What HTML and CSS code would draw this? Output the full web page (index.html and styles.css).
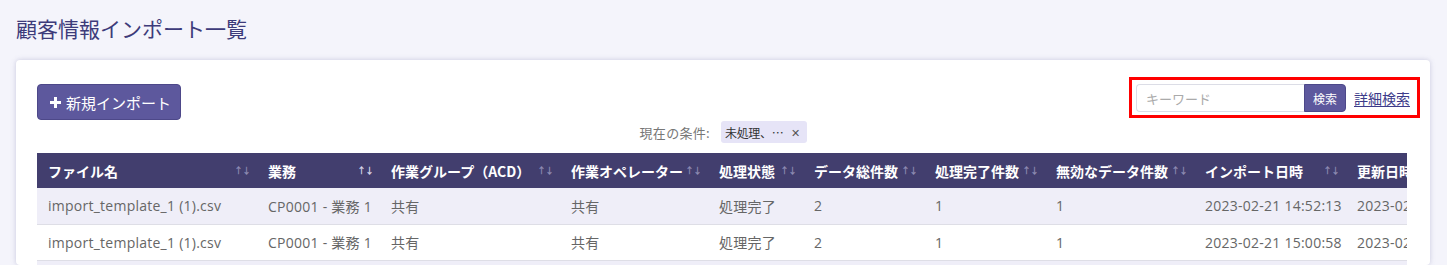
FILE: index.html
```html
<!DOCTYPE html>
<html lang="ja">
<head>
<meta charset="utf-8">
<title>顧客情報インポート一覧</title>
<link rel="stylesheet" href="styles.css">
</head>
<body>
<div class="page">
  <h1 class="title">顧客情報インポート一覧</h1>
  <section class="card">
    <div class="toolbar">
      <button class="btn-primary" type="button">
        <svg class="plus" width="13" height="13" viewBox="0 0 13 13"><path d="M6.5 1v11M1 6.5h11" stroke="#fff" stroke-width="3"/></svg>
        <span>新規インポート</span>
      </button>
      <div class="search">
        <div class="search-group">
          <input class="search-input" type="text" placeholder="キーワード">
          <button class="search-btn" type="button">検索</button>
        </div>
        <a class="detail-link" href="#">詳細検索</a>
      </div>
    </div>
    <div class="conditions">
      <span class="cond-label">現在の条件:</span>
      <span class="chip"><span class="chip-text">未処理、…</span><span class="chip-x">✕</span></span>
    </div>
    <div class="table-wrap">
      <table class="grid">
        <colgroup>
          <col style="width:220px"><col style="width:123px"><col style="width:180px"><col style="width:148px"><col style="width:95px"><col style="width:121px"><col style="width:121px"><col style="width:149px"><col style="width:152px"><col style="width:160px">
        </colgroup>
        <thead>
          <tr>
            <th><span class="th-in"><span>ファイル名</span><span class="sort">↑↓</span></span></th>
            <th><span class="th-in"><span>業務</span><span class="sort active">↑↓</span></span></th>
            <th><span class="th-in"><span>作業グループ（ACD）</span><span class="sort">↑↓</span></span></th>
            <th><span class="th-in"><span>作業オペレーター</span><span class="sort">↑↓</span></span></th>
            <th><span class="th-in"><span>処理状態</span><span class="sort">↑↓</span></span></th>
            <th><span class="th-in"><span>データ総件数</span><span class="sort">↑↓</span></span></th>
            <th><span class="th-in"><span>処理完了件数</span><span class="sort">↑↓</span></span></th>
            <th><span class="th-in"><span>無効なデータ件数</span><span class="sort">↑↓</span></span></th>
            <th><span class="th-in"><span>インポート日時</span><span class="sort">↑↓</span></span></th>
            <th><span class="th-in"><span>更新日時</span><span class="sort">↑↓</span></span></th>
          </tr>
        </thead>
        <tbody>
          <tr>
            <td>import_template_1 (1).csv</td><td>CP0001 - 業務 1</td><td>共有</td><td>共有</td><td>処理完了</td><td>2</td><td>1</td><td>1</td><td>2023-02-21 14:52:13</td><td>2023-02-21 14:52:13</td>
          </tr>
          <tr>
            <td>import_template_1 (1).csv</td><td>CP0001 - 業務 1</td><td>共有</td><td>共有</td><td>処理完了</td><td>2</td><td>1</td><td>1</td><td>2023-02-21 15:00:58</td><td>2023-02-21 15:00:58</td>
          </tr>
          <tr>
            <td>import_template_1 (1).csv</td><td>CP0001 - 業務 1</td><td>共有</td><td>共有</td><td>処理完了</td><td>2</td><td>1</td><td>1</td><td>2023-02-21 15:10:22</td><td>2023-02-21 15:10:22</td>
          </tr>
        </tbody>
      </table>
    </div>
  </section>
</div>
</body>
</html>
```
FILE: styles.css
```css
* { box-sizing: border-box; }
html, body { margin: 0; padding: 0; }
body {
  background: #f4f4fb;
  font-family: "Noto Sans CJK JP", "Noto Sans", sans-serif;
  overflow: hidden;
  height: 265px;
}
.page { padding: 13px 17px 0 16px; }
.title {
  margin: 0;
  font-size: 21px;
  line-height: 30px;
  font-weight: 400;
  color: #3d3b7a;
}
.card {
  margin-top: 17px;
  background: #fff;
  border-radius: 4px;
  box-shadow: 0 0 5px rgba(120, 120, 170, 0.35);
  padding: 24px 20px 0 21px;
  height: 205px;
  overflow: hidden;
}
.toolbar {
  display: flex;
  justify-content: space-between;
  align-items: flex-start;
}
.btn-primary {
  display: flex;
  align-items: center;
  gap: 4px;
  height: 36px;
  width: 144px;
  padding: 0 0 0 11px;
  background: #5d589d;
  border: 1px solid #4d4889;
  border-radius: 4px;
  color: #fff;
  font-family: "Noto Sans CJK JP", sans-serif;
  font-size: 15px;
}
.plus { display: block; }
.search {
  position: relative;
  display: flex;
  align-items: center;
  gap: 8px;
}
.search::after {
  content: "";
  position: absolute;
  left: -7px; right: -10px; top: -7px; bottom: -6px;
  border: 3px solid #f00;
  pointer-events: none;
}
.search-group { display: flex; }
.search-input {
  width: 168px;
  height: 28px;
  border: 1px solid #dcdde6;
  border-right: none;
  border-radius: 4px 0 0 4px;
  padding: 0 9px;
  font-family: "Noto Sans CJK JP", sans-serif;
  font-size: 13px;
  color: #333;
  outline: none;
}
.search-input::placeholder { color: #aaa; }
.search-btn {
  width: 42px;
  height: 28px;
  border: 1px solid #4d4889;
  border-radius: 0 4px 4px 0;
  background: #5d589d;
  color: #fff;
  font-family: "Noto Sans CJK JP", sans-serif;
  font-size: 12px;
  padding: 0;
}
.detail-link {
  color: #3d3b8a;
  font-size: 14px;
  text-decoration: underline;
  text-underline-offset: 2px;
}
.conditions {
  display: flex;
  justify-content: center;
  align-items: center;
  gap: 11px;
  margin-top: 1px;
  height: 22px;
}
.cond-label {
  color: #777;
  font-size: 13px;
  letter-spacing: 0.3px;
}
.chip {
  display: flex;
  align-items: center;
  gap: 8px;
  height: 22px;
  padding: 0 7px 0 4px;
  background: #e6e4f7;
  border-radius: 3px;
  font-size: 12px;
  color: #333;
}
.chip-text { letter-spacing: -0.3px; }
.chip-x { font-size: 11px; color: #555; line-height: 1; }
.table-wrap {
  margin-top: 10px;
  margin-right: 3px;
  overflow: hidden;
}
.grid {
  border-collapse: collapse;
  table-layout: fixed;
  width: 1469px;
  font-family: "Open Sans", "Noto Sans CJK JP", sans-serif;
}
.grid th {
  background: #423e6e;
  color: #fff;
  height: 35px;
  padding: 0 5px 0 11px;
  text-align: left;
  font-size: 14px;
  font-weight: 700;
  font-family: "Noto Sans CJK JP", sans-serif;
  white-space: nowrap;
}
.th-in {
  display: flex;
  justify-content: space-between;
  align-items: center;
}
.sort {
  font-size: 9px;
  color: #8e8bb3;
  letter-spacing: -1px;
  margin-right: 2px;
}
.sort.active { color: #d8d7ea; }
.grid td {
  height: 36px;
  padding: 0 11px;
  font-size: 14px;
  letter-spacing: 0.25px;
  color: #666;
  border-bottom: 1px solid #dedee6;
  white-space: nowrap;
  overflow: hidden;
}
.grid tbody tr:nth-child(odd) td { background: #efeef8; }
.grid tbody tr:nth-child(even) td { background: #fff; }
```
